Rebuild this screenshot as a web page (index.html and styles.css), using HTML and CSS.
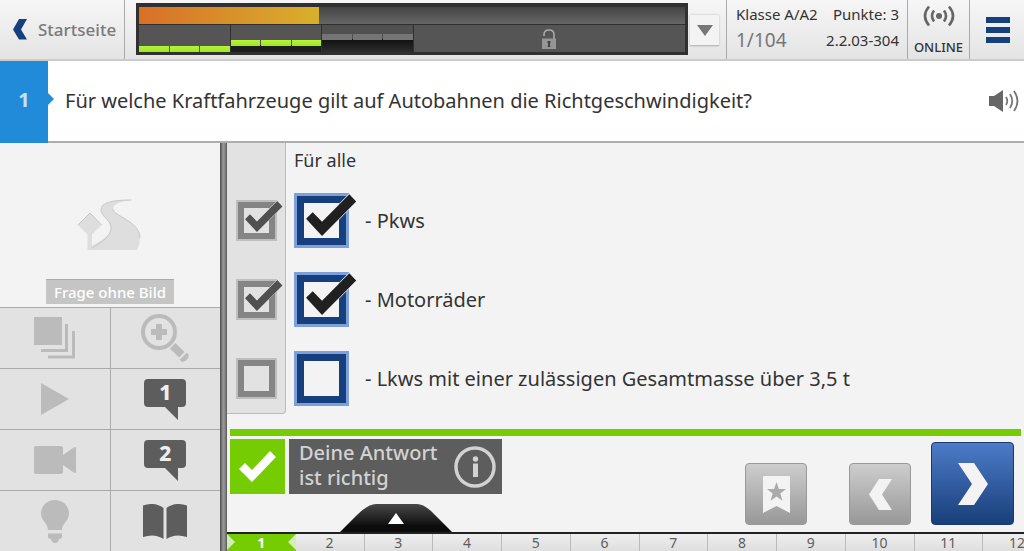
FILE: index.html
```html
<!DOCTYPE html>
<html lang="de">
<head>
<meta charset="utf-8">
<meta name="viewport" content="width=device-width, initial-scale=1">
<title>Frage 1</title>
<link rel="stylesheet" href="styles.css">
</head>
<body>
<div class="app">
  <header class="topbar">
    <a class="home" href="#">
      <svg width="15" height="21" viewBox="0 0 15 21" aria-hidden="true"><path d="M6 0h8L8 10.500l6 10H6L0 10.500z" fill="#163f7d"/></svg>
      Startseite
    </a>
    <div class="progress-wrap">
      <div class="progress">
        <div class="progress-track"><div class="progress-fill" style="width:33%"></div></div>
        <div class="progress-levels">
          <div class="level level-low"><i></i><i></i><i></i></div>
          <div class="level level-mid"><i></i><i></i><i></i></div>
          <div class="level level-high"><i></i><i></i><i></i></div>
          <div class="level-locked">
            <svg width="14" height="20" viewBox="0 0 14 20" aria-hidden="true"><path d="M2 7V5.500C2 2.500 4 1 7 1s5 1.500 5 4.500V10" fill="none" stroke="#aaa" stroke-width="1.600"/><path d="M0 9.500h14V20H0z" fill="#969696"/><path d="M5.500 12h3v2l-.7.700.7 3.300h-3l.7-3.300-.7-.7z" fill="#444"/></svg>
          </div>
        </div>
      </div>
      <button class="dropdown" type="button" aria-label="Auswahl">
        <svg width="16" height="11" viewBox="0 0 16 11" aria-hidden="true"><path d="M0 0h16L8 11z" fill="#777"/></svg>
      </button>
    </div>
    <div class="info">
      <span>Klasse A/A2</span><span class="right">Punkte: 3</span>
      <span class="count">1/104</span><span class="right">2.2.03-304</span>
    </div>
    <div class="online">
      <svg width="32" height="22" viewBox="0 0 32 22" fill="none" stroke="#666" stroke-width="2.600" aria-hidden="true"><circle cx="16" cy="11" r="3" fill="#666" stroke="none"/><path d="M11 5.500q-4 5.500 0 11M21 5.500q4 5.500 0 11M6 1.500q-8 9.500 0 19M26 1.500q8 9.500 0 19"/></svg>
      <span>ONLINE</span>
    </div>
    <button class="menu" type="button" aria-label="Menü"><i></i><i></i><i></i></button>
  </header>

  <section class="question">
    <div class="question-number">1</div>
    <h1>Für welche Kraftfahrzeuge gilt auf Autobahnen die Richtgeschwindigkeit?</h1>
    <button class="sound" type="button" aria-label="Vorlesen">
      <svg width="30" height="22" viewBox="0 0 30 22" fill="none" aria-hidden="true"><path d="M0 6h5l9-6v22l-9-6H0z" fill="#666"/><path d="M17 7q2.500 4 0 8M21 4q4.500 7 0 14M25 1q7 10 0 20" stroke="#777" stroke-width="1.800"/></svg>
    </button>
  </section>

  <div class="main">
    <aside class="side">
      <div class="picture">
        <svg width="64" height="52" viewBox="0 0 64 52" aria-hidden="true"><path d="M0 26 12 14l11.500 12L14 35.500V47c10-6 19-11 19-18 0-8-10-12-10-18C23 4 33 1 53.500 1 43 2 35 5 35 10c0 7 27 12 27 29q0 6-3 12H9.500V35.500z" fill="#dedede"/><path d="M0 26 12 14l11.500 12M14 49c10-6 19-12 19-20 0-8-10-12-10-18C23 4 33 1 53.500 1M35 10c0 7 27 12 27 29" fill="none" stroke="#c6c6c6"/></svg>
        <p>Frage ohne Bild</p>
      </div>
      <div class="tools">
        <button type="button" disabled aria-label="Bilder"><svg width="42" height="42" viewBox="0 0 42 42" aria-hidden="true"><path d="M0 0h28v28H0z" fill="#bbb"/><path d="M32.500 7v26.500H7M39.500 14v26H14" fill="none" stroke="#bbb" stroke-width="3"/></svg></button>
        <button type="button" disabled aria-label="Vergrößern"><svg width="48" height="48" viewBox="0 0 48 48" aria-hidden="true"><circle cx="18" cy="18" r="16" fill="none" stroke="#bbb" stroke-width="4"/><path d="M15 10h6v5h5v6h-5v5h-6v-5h-5v-6h5zM34.500 29 46 40.500 40.500 46 29 34.500z" fill="#bbb"/><path d="m45 38 3 3q-1 6-7 7l-3-3" fill="#bbb"/><path d="m38 45 8-8" stroke="#e2e2e2" stroke-width="2"/></svg></button>
        <button type="button" disabled aria-label="Abspielen"><svg width="28" height="32" viewBox="0 0 28 32" aria-hidden="true"><path d="M0 0 28 16 0 32z" fill="#bbb"/></svg></button>
        <button type="button" class="bubble" aria-label="Sprache 1"><svg width="42" height="42" viewBox="0 0 42 42" aria-hidden="true"><path d="M4 1h34q4 0 4 4v20q0 4-4 4h-4v13L21 29H4q-4 0-4-4V5q0-4 4-4z" fill="#5d5d5d"/></svg><span>1</span></button>
        <button type="button" disabled aria-label="Video"><svg width="42" height="28" viewBox="0 0 42 28" aria-hidden="true"><path d="M2 0h25q2 0 2 2v7l10-7q3-2 3 0v24q0 2-3 0l-10-7v7q0 2-2 2H2q-2 0-2-2V2q0-2 2-2z" fill="#bbb"/></svg></button>
        <button type="button" class="bubble" aria-label="Sprache 2"><svg width="42" height="42" viewBox="0 0 42 42" aria-hidden="true"><path d="M4 1h34q4 0 4 4v20q0 4-4 4h-4v13L21 29H4q-4 0-4-4V5q0-4 4-4z" fill="#5d5d5d"/></svg><span>2</span></button>
        <button type="button" disabled aria-label="Tipp"><svg width="28" height="43" viewBox="0 0 28 43" aria-hidden="true"><path d="M7 30C7 23 0 21 0 13.500 0 6 6 0 14 0s14 6 14 13.500C28 21 21 23 21 30zM7 33.500h14v3q0 2-3 2.500-1 4-4 4t-4-4q-3-.5-3-2.500z" fill="#bbb"/></svg></button>
        <button type="button" aria-label="Lehrbuch"><svg width="44" height="35" viewBox="0 0 44 35" aria-hidden="true"><path d="M0 1.500Q12-2.500 20.500 4v31Q12 29 0 33zM44 1.500Q32-2.500 23.500 4v31Q32 29 44 33z" fill="#5d5d5d"/></svg></button>
      </div>
    </aside>

    <main class="content">
      <div class="answers">
        <div class="solution">
          <span class="tick"><input type="checkbox" checked disabled aria-label="Lösung: Pkws"><svg viewBox="0 0 48 40" aria-hidden="true"><path d="m3.300 21 5.400-5.400 7.600 7.800L38.500 1l5.600 6-27.800 28z"/></svg></span>
          <span class="tick"><input type="checkbox" checked disabled aria-label="Lösung: Motorräder"><svg viewBox="0 0 48 40" aria-hidden="true"><path d="m3.300 21 5.400-5.400 7.600 7.800L38.500 1l5.600 6-27.800 28z"/></svg></span>
          <span class="tick"><input type="checkbox" disabled aria-label="Lösung: Lkws"><svg viewBox="0 0 48 40" aria-hidden="true"><path d="m3.300 21 5.400-5.400 7.600 7.800L38.500 1l5.600 6-27.800 28z"/></svg></span>
        </div>
        <div class="choices">
          <h2>Für alle</h2>
          <label><span class="tick"><input type="checkbox" checked><svg viewBox="0 0 48 40" aria-hidden="true"><path d="m3.300 21 5.400-5.400 7.600 7.800L38.500 1l5.600 6-27.800 28z"/></svg></span>- Pkws</label>
          <label><span class="tick"><input type="checkbox" checked><svg viewBox="0 0 48 40" aria-hidden="true"><path d="m3.300 21 5.400-5.400 7.600 7.800L38.500 1l5.600 6-27.800 28z"/></svg></span>- Motorräder</label>
          <label><span class="tick"><input type="checkbox"><svg viewBox="0 0 48 40" aria-hidden="true"><path d="m3.300 21 5.400-5.400 7.600 7.800L38.500 1l5.600 6-27.800 28z"/></svg></span>- Lkws mit einer zulässigen Gesamtmasse über 3,5 t</label>
        </div>
      </div>

      <div class="result-line"></div>
      <div class="actions">
        <div class="result">
          <div class="result-mark"><svg width="37" height="31" viewBox="0 0 37 31" aria-hidden="true"><path d="m0 18 6-6 7 7L31 0l6 6-24 25z" fill="#fff"/></svg></div>
          <div class="result-text">
            <p>Deine Antwort<br>ist richtig</p>
            <svg width="42" height="42" viewBox="0 0 42 42" aria-hidden="true"><circle cx="21" cy="21" r="19" fill="none" stroke="#d2d2d2" stroke-width="3.500"/><circle cx="21.500" cy="13" r="2.700" fill="#d2d2d2"/><path d="M19 17.500h5V31h-5z" fill="#d2d2d2"/></svg>
          </div>
        </div>
        <button class="key bookmark" type="button" aria-label="Merken"><svg width="27" height="37" viewBox="0 0 27 37" aria-hidden="true"><path d="M1 0h25q1 0 1 1v36l-13.500-7L0 37V1q0-1 1-1z" fill="#f3f3f3"/><path d="m13.500 6 2.400 7H23l-5.700 4.500 2.200 7.200-6-4.300-6 4.300 2.200-7.200L4 13h7.100z" fill="#ababab"/></svg></button>
        <button class="key" type="button" aria-label="Zurück"><svg width="23" height="31" viewBox="0 0 23 31" aria-hidden="true"><path d="M10 0h13l-10 15.500L23 31H10L0 15.500z" fill="#f3f3f3"/></svg></button>
        <button class="key next" type="button" aria-label="Weiter"><svg width="30" height="42" viewBox="0 0 30 42" aria-hidden="true"><path d="M0 0h16l14 21-14 21H0l14-21z" fill="#f3f3f3"/></svg></button>
      </div>

      <div class="pager">
        <button class="pager-tab" type="button" aria-label="Übersicht öffnen"><svg width="112" height="28" viewBox="0 0 112 28" aria-hidden="true"><defs><linearGradient id="tab" x2="0" y2="1"><stop stop-color="#484848"/><stop offset=".8" stop-color="#0c0c0c"/></linearGradient></defs><path d="M0 28 17 11Q28 0 36 0h41q8 0 18 11l17 17z" fill="url(#tab)"/><path d="m56 9 8 11H48z" fill="#fff"/></svg></button>
        <nav class="pages" aria-label="Fragen">
          <a class="current" href="#" aria-current="page">1</a><a href="#">2</a><a href="#">3</a><a href="#">4</a><a href="#">5</a><a href="#">6</a><a href="#">7</a><a href="#">8</a><a href="#">9</a><a href="#">10</a><a href="#">11</a><a href="#">12</a>
        </nav>
      </div>
    </main>
  </div>
</div>
</body>
</html>
```

FILE: styles.css
```css
* { box-sizing: border-box; }

body {
  margin: 0;
  background: #f3f3f3;
  color: #333;
  font-family: "Noto Sans", "Open Sans", sans-serif;
  font-weight: 500;
}

h1, h2, p { margin: 0; font-weight: inherit; }
button { padding: 0; border: 0; background: none; font: inherit; color: inherit; }
svg { display: block; }

.app { display: flex; flex-direction: column; min-height: 100vh; }

/* Top bar */
.topbar {
  display: flex;
  height: 61px;
  background: linear-gradient(#f6f6f6, #e4e4e4);
  border-bottom: 2px solid #cbcbcb;
}
.home {
  display: flex;
  align-items: center;
  gap: 10px;
  width: 125px;
  padding-left: 13px;
  border-right: 1px solid #aaa;
  color: #7a7a7a;
  font-size: 17px;
  text-decoration: none;
}
.progress-wrap {
  display: flex;
  flex: 1;
  gap: 2px;
  padding: 3px 7px 4px 11px;
}
.progress {
  display: flex;
  flex: 1;
  flex-direction: column;
  gap: 1px;
  padding: 4px 3px 3px;
  background: #303030;
}
.progress-track { height: 17px; background: linear-gradient(#444, #666); }
.progress-fill { height: 100%; background: linear-gradient(90deg, #d96f27, #d8b02c); }
.progress-levels {
  display: grid;
  flex: 1;
  grid-template-columns: 1fr 1fr 1fr 3fr;
  gap: 1px;
}
.level {
  display: grid;
  grid-template-columns: repeat(3, 1fr);
  column-gap: 1px;
  align-items: end;
  background: #555;
}
.level i { height: 6px; background: linear-gradient(#b4f43a, #a1e525); }
.level-mid { padding-bottom: 6px; background: linear-gradient(#555 20px, #1d1d1d 20px); }
.level-high { padding-bottom: 12px; background: linear-gradient(#505050 14px, #111 14px, #2c2c2c); }
.level-high i { background: #757575; }
.level-locked {
  display: flex;
  align-items: center;
  justify-content: center;
  background: #555;
}
.dropdown {
  display: flex;
  align-items: center;
  justify-content: center;
  align-self: flex-end;
  width: 29px;
  height: 31px;
  margin-bottom: 9px;
  background: #f3f3f3;
  border-bottom: 1px solid #bbb;
  box-shadow: 0 0 2px #bbb;
}
.info {
  display: grid;
  grid-template-columns: auto auto;
  align-content: start;
  align-items: center;
  justify-content: space-between;
  width: 181px;
  padding: 1px 8px 2px 9px;
  border-left: 1px solid #aaa;
  font-size: 15px;
  font-weight: 400;
  line-height: 26px;
}
.right { text-align: right; }
.count { color: #777; font-size: 19px; }
.online {
  display: flex;
  flex-direction: column;
  align-items: center;
  justify-content: space-between;
  width: 63px;
  padding: 5px 0 3px;
  border: solid #aaa;
  border-width: 0 1px;
  font-size: 13px;
  line-height: 18px;
}
.menu {
  display: flex;
  flex-direction: column;
  align-items: center;
  justify-content: center;
  gap: 4px;
  width: 54px;
  padding-left: 2px;
}
.menu i { width: 24px; height: 6px; background: #163f7d; }

/* Question */
.question {
  display: flex;
  align-items: center;
  min-height: 82px;
  padding-right: 5px;
  background: #fff;
  border-bottom: 2px solid #aaaeae;
}
.question-number {
  position: relative;
  display: flex;
  align-items: center;
  justify-content: center;
  align-self: stretch;
  width: 48px;
  margin-bottom: -2px;
  padding-bottom: 6px;
  background: #218bd9;
  color: #c4e2f7;
  font-size: 20px;
  font-weight: 700;
}
.question-number::after {
  content: "";
  position: absolute;
  left: 100%;
  border: 6px solid transparent;
  border-left-color: #218bd9;
  border-right-width: 0;
}
.question h1 { flex: 1; padding-left: 17px; font-size: 20px; font-weight: 400; line-height: 26px; }

/* Side panel */
.main { display: flex; flex: 1; }
.side { display: flex; flex-direction: column; width: 220px; }
.picture {
  display: flex;
  flex: 1;
  flex-direction: column;
  align-items: center;
  justify-content: flex-end;
  gap: 28px;
  padding-bottom: 3px;
}
.picture p {
  padding: 0 8px;
  background: #c5c5c5;
  border-top: 1px solid #aaa;
  color: #fff;
  font-size: 15px;
  line-height: 24px;
}
.tools {
  display: grid;
  grid-template-columns: 1fr 1fr;
  grid-auto-rows: 60px;
  gap: 1px;
  background: #aaa;
  border-top: 1px solid #aaa;
}
.tools button { display: flex; align-items: center; justify-content: center; background: #e2e2e2; }
.bubble { position: relative; }
.bubble span {
  position: absolute;
  inset: 0 0 auto;
  color: #eee;
  font-size: 21px;
  font-weight: 800;
  line-height: 46px;
}

/* Answers */
.content {
  display: flex;
  flex: 1;
  flex-direction: column;
  min-width: 0;
  padding-left: 7px;
  background: linear-gradient(90deg, #4a4a4a 0, #999 3px, #888 5px, #555 7px) 0 0 / 7px 100% no-repeat;
}
.answers { display: flex; flex: 1; align-items: flex-start; gap: 8px; }
.solution {
  display: flex;
  flex-direction: column;
  gap: 38px;
  padding: 57px 8px 14px 9px;
  background: #e2e2e2;
  border: solid #bbb;
  border-width: 0 1px 1px 0;
  border-radius: 0 0 4px 0;
}
.choices {
  display: flex;
  flex-direction: column;
  gap: 24px;
  padding-top: 5px;
  font-size: 20px;
  font-weight: 400;
}
.choices h2 { margin-bottom: -3px; font-size: 18px; line-height: 24px; }
.choices label { display: flex; align-items: center; gap: 16px; line-height: 24px; }
.tick { position: relative; display: block; width: 41px; height: 41px; flex: none; }
.tick input {
  display: block;
  appearance: none;
  width: 100%;
  height: 100%;
  margin: 0;
  border: 6px solid #858585;
  outline: 2px solid #bebebe;
  outline-offset: -2px;
}
.tick svg {
  position: absolute;
  top: 0;
  left: 6px;
  width: 44px;
  fill: #505050;
  stroke: #e2e2e2;
  stroke-width: 1;
  paint-order: stroke;
}
.tick input:not(:checked) + svg { display: none; }
.solution .tick input { border-width: 8px; }
.choices .tick { width: 55px; height: 55px; }
.choices .tick input { border: 10px solid #163f7d; outline: 3px solid #7d9fda; outline-offset: -3px; }
.choices .tick svg { left: 8px; width: 59px; fill: #202020; stroke: #f3f3f3; }

/* Result and navigation */
.result-line { height: 7px; margin: 0 3px; background: #76cc02; }
.actions { display: flex; align-items: flex-end; padding: 3px 10px 7px 3px; }
.result { display: flex; align-self: flex-start; gap: 4px; margin-right: auto; }
.result-mark {
  display: flex;
  align-items: center;
  justify-content: center;
  width: 55px;
  background: #76cc02;
}
.result-text {
  display: flex;
  align-items: center;
  justify-content: space-between;
  width: 213px;
  height: 55px;
  padding: 0 6px 0 10px;
  background: #5d5d5d;
  color: #d2d2d2;
  font-size: 20px;
  line-height: 25px;
}
.result-text p { padding-bottom: 3px; }
.key {
  display: flex;
  align-items: center;
  justify-content: center;
  width: 62px;
  height: 62px;
  background: linear-gradient(#cdcdcd, #989898);
  border: 1px solid #999;
  border-radius: 4px;
}
.bookmark { margin-right: 42px; }
.next {
  width: 83px;
  height: 83px;
  margin: 3px 0 0 20px;
  background: linear-gradient(#4d7bc7, #183f7a);
  border: 1px solid #173a73;
}
.pager { position: relative; }
.pager-tab { position: absolute; bottom: 100%; left: 113px; }
.pages {
  display: grid;
  grid-template-columns: repeat(12, calc((100% + 28px) / 12));
  overflow: hidden;
  background: linear-gradient(#efefef, #dedede);
  border-top: 2px solid #222;
}
.pages a {
  position: relative;
  height: 17px;
  border-right: 1px solid #bbb;
  color: #5d5d5d;
  font-size: 14px;
  font-weight: 400;
  line-height: 17px;
  text-align: center;
  text-decoration: none;
}
.pages .current { background: #76cc02; border: 0; color: #fff; font-weight: 700; }
.current::before, .current::after {
  content: "";
  position: absolute;
  top: 0;
  border: 8px solid transparent;
}
.current::before { left: 0; border-left-color: #d4edb4; border-right-width: 0; }
.current::after { right: 0; border-right-color: #d4edb4; border-left-width: 0; }
```
